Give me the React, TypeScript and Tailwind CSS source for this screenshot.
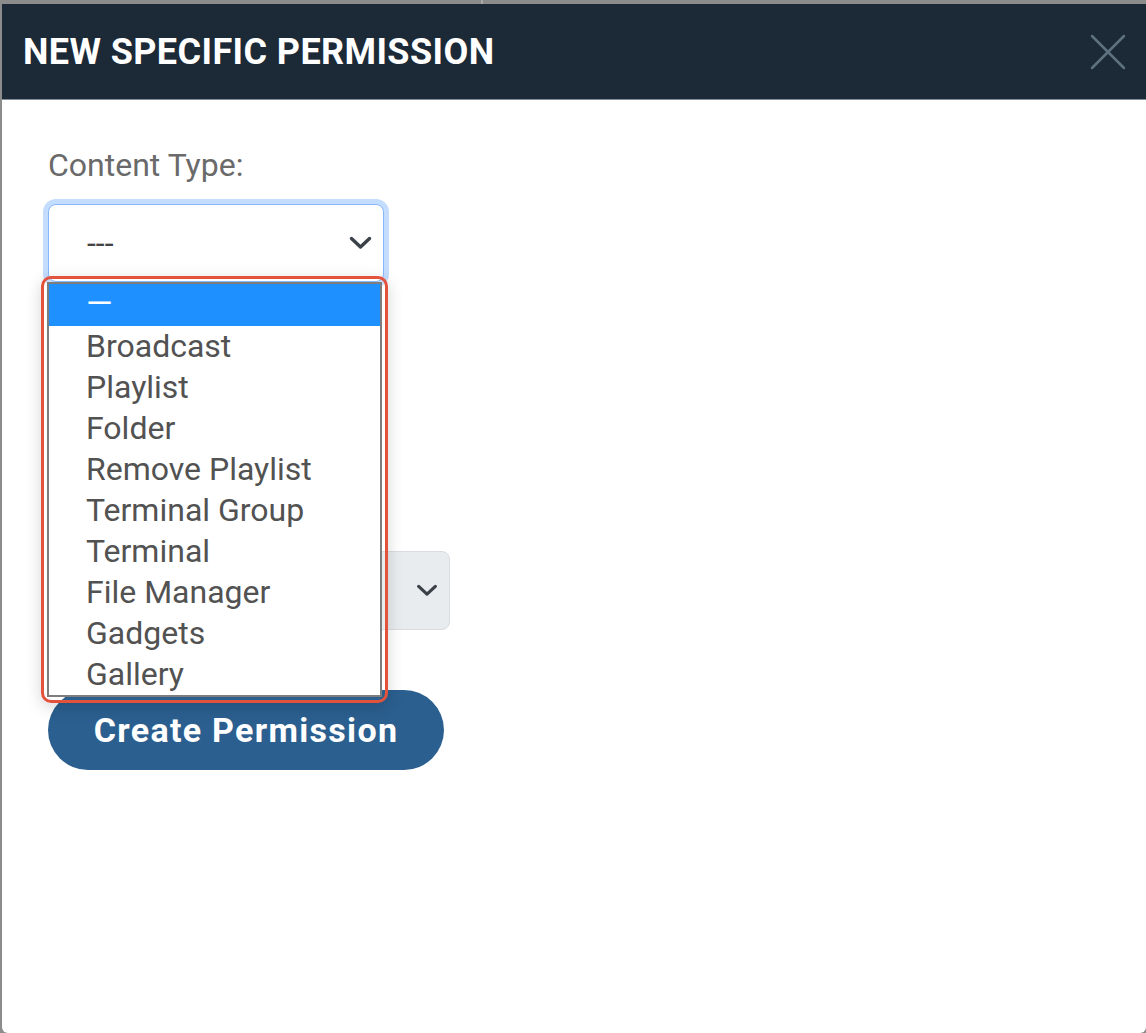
const options = [
  "Broadcast",
  "Playlist",
  "Folder",
  "Remove Playlist",
  "Terminal Group",
  "Terminal",
  "File Manager",
  "Gadgets",
  "Gallery",
];

function CloseIcon() {
  return (
    <svg width="36" height="36" viewBox="0 0 36 36" className="text-[#5d717e]">
      <path d="M2 2 L34 34 M34 2 L2 34" stroke="currentColor" strokeWidth="2.5" strokeLinecap="round" />
    </svg>
  );
}

function Chevron({ w = 23, h = 14 }: { w?: number; h?: number }) {
  return (
    <svg width={w} height={h} viewBox="0 0 23 14" className="text-[#3b4148]">
      <path d="M2.5 2.5 L11.5 11 L20.5 2.5" fill="none" stroke="currentColor" strokeWidth="3.4" strokeLinecap="round" strokeLinejoin="round" />
    </svg>
  );
}

function OptionList() {
  return (
    <div className="absolute left-[-7px] top-[72px] w-[347px] rounded-[10px] border-[3px] border-[#e2523c] p-[3px] shadow-[0_4px_16px_rgba(0,0,0,0.16)]">
      <div className="border-2 border-[#7d7d7d] bg-white">
        <div className="h-[42px] bg-[#1e90ff] pl-[37px] text-[34px] leading-[38px] text-white">—</div>
        {options.map((o) => (
          <div key={o} className="h-[41px] pl-[37px] text-[32px] leading-[41px] text-[#525252]">
            {o}
          </div>
        ))}
      </div>
    </div>
  );
}

export default function App() {
  return (
    <div className="flex h-[1033px] w-[1146px] flex-col overflow-hidden bg-[#8c8c8c] font-['Roboto',sans-serif]">
      <div className="flex h-[4px] shrink-0">
        <div className="w-[483px] border-r-2 border-[#a9a9a9]" />
      </div>
      <div className="ml-[2px] flex flex-1 flex-col overflow-hidden rounded-b-[6px] bg-white">
        <div className="flex h-[96px] shrink-0 items-center justify-between border-b border-[#7f8e99] bg-[#1c2937] pl-[21px] pr-[20px]">
          <h1 className="text-[36px] font-bold leading-[40px] tracking-[0.4px] text-white">NEW SPECIFIC PERMISSION</h1>
          <CloseIcon />
        </div>

        <div className="px-[46px] pt-[46px]">
          <label className="block text-[32px] leading-[38px] text-[#6a6a6a]">Content Type:</label>

          <div className="relative mt-[20px] w-[336px]">
            <div className="flex h-[78px] items-center justify-between rounded-[8px] border-[1.5px] border-[#86b7fe] bg-white pl-[38px] pr-[11px] shadow-[0_0_0_5px_#c4dcfe]">
              <span className="text-[32px] text-[#444]">---</span>
              <Chevron />
            </div>
            <OptionList />
          </div>

          <div className="mt-[269px] flex h-[79px] w-[402px] items-center justify-end rounded-[8px] border border-[#d9dde1] bg-[#e9ecef] pr-[11px]">
            <Chevron w={22} h={13} />
          </div>

          <button className="mt-[60px] flex h-[80px] w-[396px] items-center justify-center rounded-full bg-[#2b5f8f] text-[34px] font-bold tracking-[1.3px] text-white">
            Create Permission
          </button>
        </div>
      </div>
    </div>
  );
}
